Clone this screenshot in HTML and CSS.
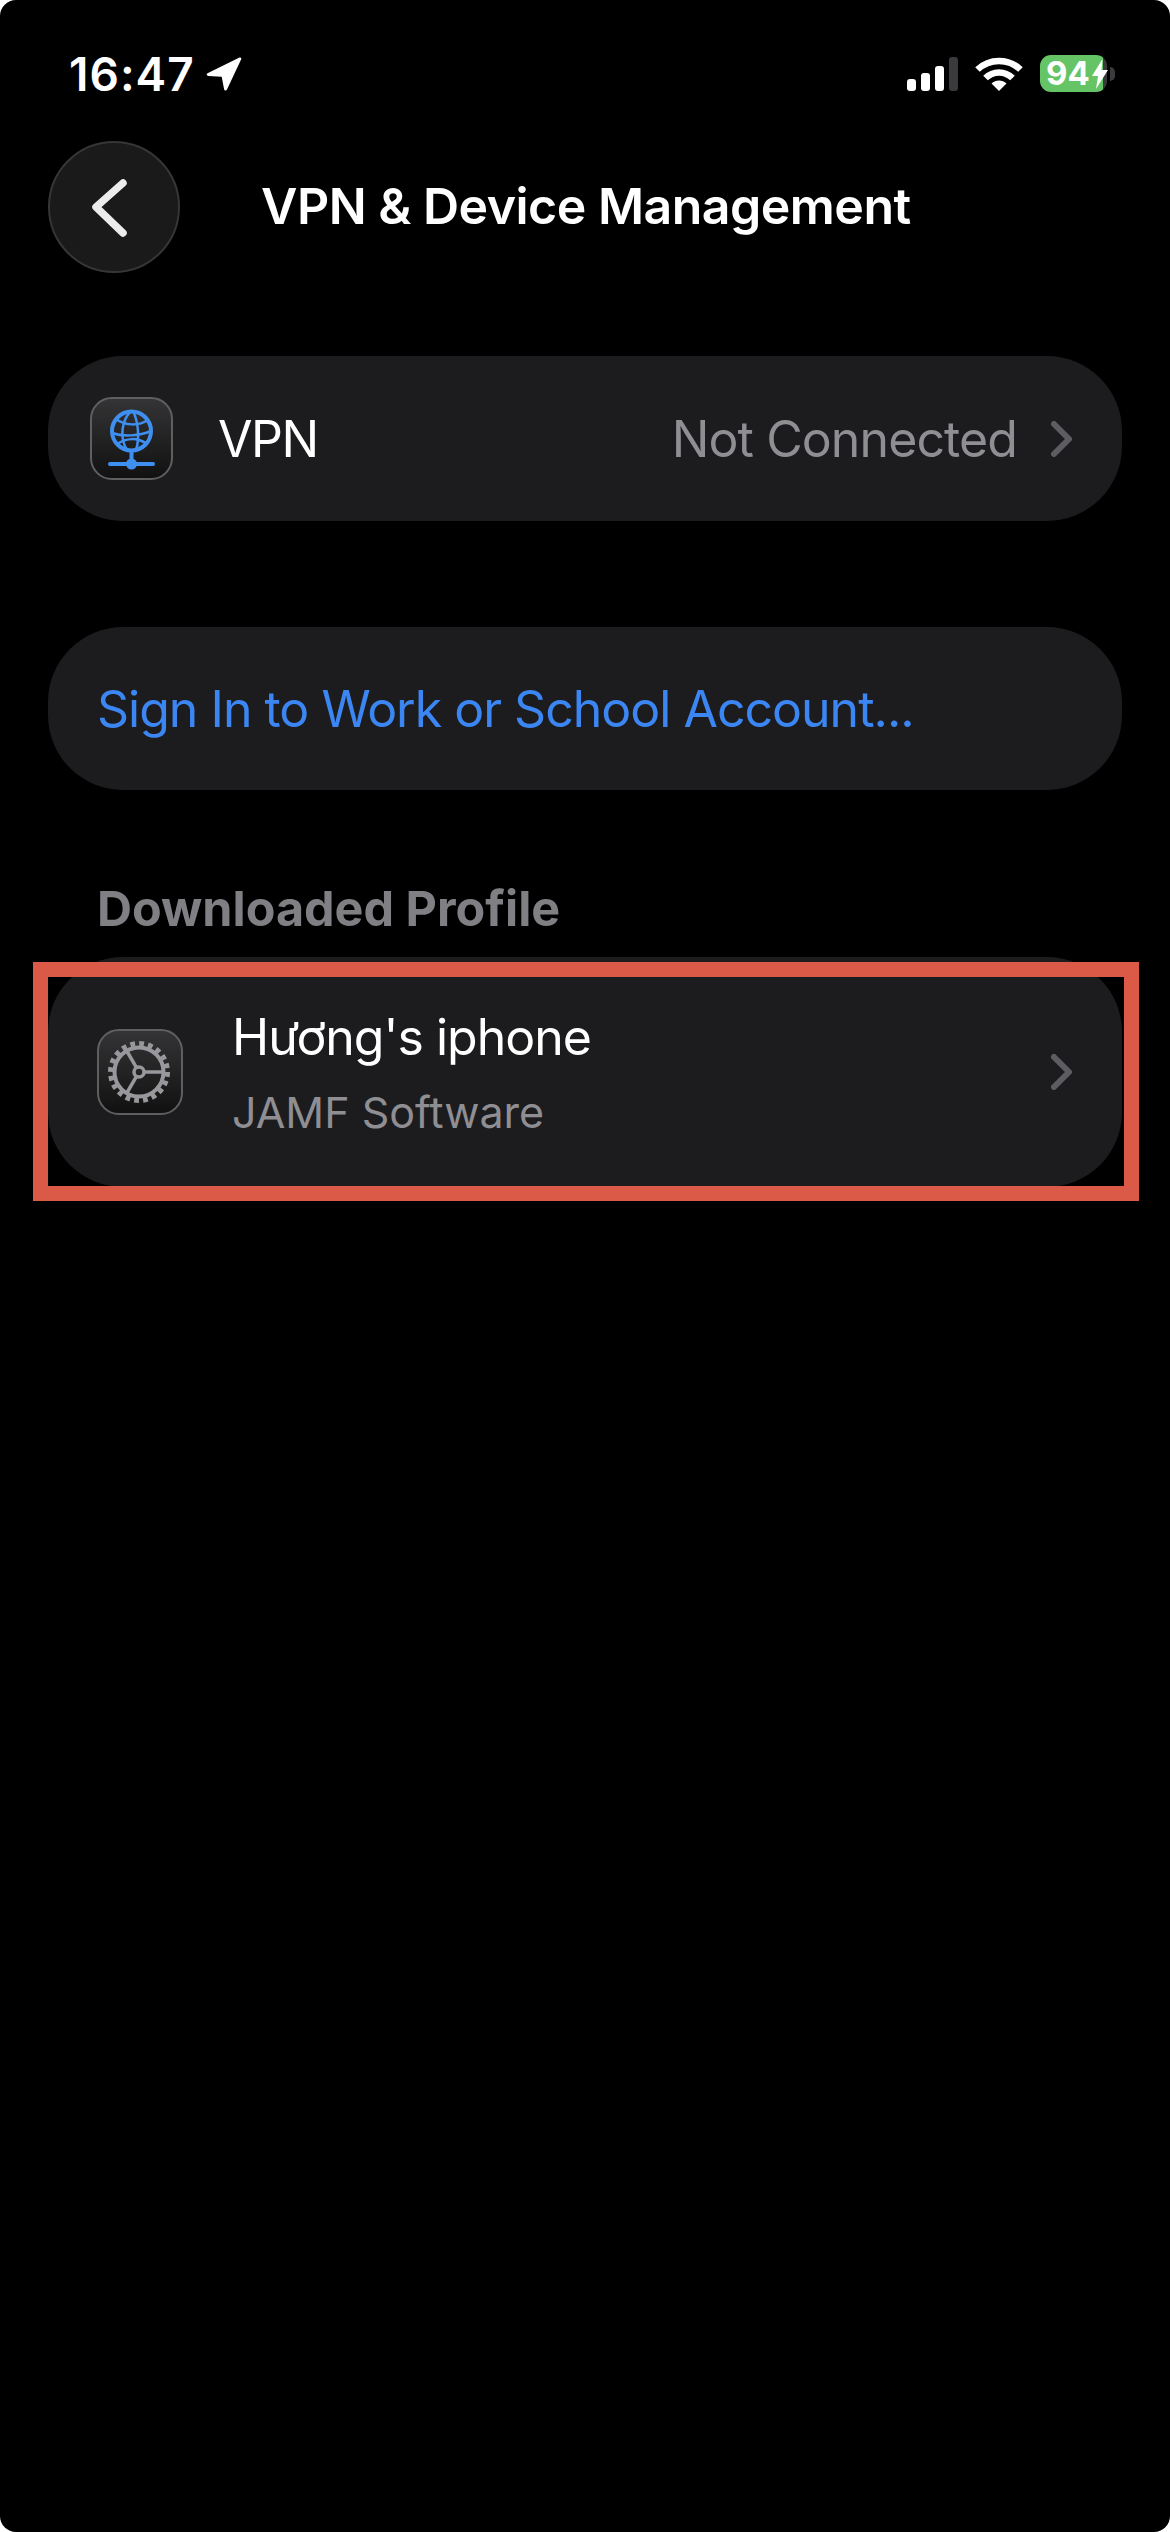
FILE: index.html
```html
<!DOCTYPE html>
<html lang="en">
<head>
<meta charset="utf-8">
<title>VPN &amp; Device Management</title>
<link rel="stylesheet" href="styles.css">
</head>
<body>
<div class="screen">
  <header class="status">
    <div class="status-left">
      <span class="time">16:47</span>
      <svg class="loc" viewBox="0 0 36 36"><path d="M1.500 17.200 33.500 1.600c1.200-.6 2.200.5 1.700 1.700L21 33.600c-.7 1.500-2.600 1.300-2.900-.3l-2.400-12.600L2.400 19.900c-1.900-.1-2.400-1.900-.9-2.700z" fill="#fff"/></svg>
    </div>
    <div class="status-right">
      <div class="signal">
        <span class="bar b1"></span><span class="bar b2"></span><span class="bar b3"></span><span class="bar b4"></span>
      </div>
      <svg class="wifi" viewBox="0 0 48 36"><g fill="none" stroke="#fff" stroke-width="6.500"><path d="M2.500 14.500C14.500 3 33.500 3 45.500 14.500"/><path d="M10.500 23C18 15.500 30 15.500 37.500 23"/></g><path d="M24 36 16.500 28.500C20.500 24.500 27.500 24.500 31.500 28.500z" fill="#fff"/></svg>
      <div class="battery">
        <div class="battery-body">
          <span class="battery-num">94</span>
          <svg class="bolt" viewBox="0 0 16 30"><path d="M10.500 0 0 17h6L4 30 16 11H9.500z" fill="#fff"/></svg>
        </div>
        <span class="battery-tip"></span>
      </div>
    </div>
  </header>

  <nav class="nav">
    <button class="back" type="button" aria-label="Back">
      <svg viewBox="0 0 132 132"><path d="M75 42 48 66 75 92" fill="none" stroke="#ececec" stroke-width="7.500" stroke-linecap="round" stroke-linejoin="round"/></svg>
    </button>
    <h1 class="title">VPN &amp; Device Management</h1>
  </nav>

  <section class="card vpn">
    <span class="app-icon icon-vpn">
      <svg viewBox="0 0 83 83">
        <g fill="none" stroke="#3f8ff0">
          <circle cx="41.500" cy="34" r="19.500" stroke-width="4"/>
          <g stroke-width="2.500">
            <path d="M41 14c-9 9-12 26-4 39"/>
            <path d="M43 14c5 10 7 27 3 39"/>
            <path d="M26 22c9 7 23 7 32 1"/>
            <path d="M22 36c11 4 27 3 39-2"/>
            <path d="M27 47c9-6 20-7 30 0"/>
          </g>
          <path d="M41.500 54v13" stroke-width="4"/>
          <path d="M20 67h43" stroke-width="4" stroke-linecap="round"/>
        </g>
        <circle cx="41.500" cy="67" r="5.500" fill="#3f8ff0"/>
      </svg>
    </span>
    <span class="label">VPN</span>
    <span class="value">Not Connected</span>
    <svg class="chev" viewBox="0 0 21 36"><path d="M3 3 18 18 3 33" fill="none" stroke="#5d5d61" stroke-width="6" stroke-linecap="round" stroke-linejoin="round"/></svg>
  </section>

  <section class="card signin">
    <a class="link">Sign In to Work or School Account...</a>
  </section>

  <h2 class="section-head">Downloaded Profile</h2>

  <section class="card profile">
    <span class="app-icon icon-gear">
      <svg viewBox="0 0 86 86">
        <g fill="none" stroke="#98989c">
          <circle cx="42" cy="43" r="27.500" stroke-width="7" stroke-dasharray="4.600 4.040"/>
          <circle cx="42" cy="43" r="24.500" stroke-width="4"/>
          <circle cx="42" cy="43" r="5" stroke-width="3.500"/>
          <path d="M47 43h20M39.500 38.700 29.500 21.500M39.500 47.300 29.500 64.500" stroke-width="3.500"/>
        </g>
      </svg>
    </span>
    <div class="profile-text">
      <span class="label">Hương's iphone</span>
      <span class="sub">JAMF Software</span>
    </div>
    <svg class="chev" viewBox="0 0 21 36"><path d="M3 3 18 18 3 33" fill="none" stroke="#5d5d61" stroke-width="6" stroke-linecap="round" stroke-linejoin="round"/></svg>
    <div class="highlight"></div>
  </section>
</div>
</body>
</html>
```
FILE: styles.css
```css
* { box-sizing: border-box; }
html { background: #fff; }
body { margin: 0; }
.screen {
  width: 1170px;
  height: 2532px;
  background: #000;
  border-radius: 16px;
  padding: 0 48px;
  color: #fff;
  font-family: Inter, "Noto Sans", sans-serif;
  overflow: hidden;
}
.status {
  height: 141px;
  display: flex;
  justify-content: space-between;
  align-items: flex-start;
  padding-top: 55px;
}
.status-left {
  display: flex;
  align-items: center;
  gap: 11px;
  padding-left: 21px;
}
.time {
  font-size: 46px;
  line-height: 38px;
  font-weight: 600;
  letter-spacing: 1px;
}
.loc { width: 36px; height: 36px; display: block; }
.status-right {
  display: flex;
  align-items: flex-start;
  margin-right: 7px;
}
.signal {
  display: flex;
  align-items: flex-end;
  gap: 5px;
  height: 36px;
  width: 68px;
}
.bar {
  width: 9px;
  background: #fff;
  border-radius: 3px;
}
.b1 { height: 12px; }
.b2 { height: 18px; }
.b3 { height: 25px; }
.b4 { height: 34px; background: #3a3a3c; }
.wifi { width: 48px; height: 36px; display: block; }
.battery { display: flex; align-items: center; margin-left: 17px; height: 37px; }
.battery-body {
  width: 67px;
  height: 37px;
  border-radius: 11px;
  background: linear-gradient(to right, #65c466 94%, #3a3a3c 94%);
  display: flex;
  align-items: center;
  padding-left: 6px;
  gap: 2px;
}
.battery-num {
  font-size: 33px;
  font-weight: 700;
  line-height: 37px;
}
.bolt { width: 16px; height: 30px; display: block; flex: none; }
.battery-tip {
  width: 5px;
  height: 14px;
  margin-left: 3px;
  background: #3a3a3c;
  border-radius: 0 7px 7px 0;
}
.nav {
  display: flex;
  align-items: center;
  gap: 81px;
  height: 132px;
  margin-bottom: 83px;
}
.back {
  width: 132px;
  height: 132px;
  flex: none;
  padding: 0;
  border-radius: 50%;
  border: 2px solid #363636;
  background: #1a1a1a;
  position: relative;
}
.back svg { position: absolute; left: -2px; top: -2px; width: 132px; height: 132px; }
.title {
  margin: 0 0 3px;
  font-size: 50px;
  font-weight: 600;
  line-height: 60px;
  letter-spacing: -0.5px;
}
.card {
  background: #1c1c1e;
  border-radius: 75px;
  display: flex;
  align-items: center;
  position: relative;
}
.vpn {
  height: 165px;
  padding: 0 50px 0 42px;
  margin-bottom: 106px;
}
.app-icon {
  flex: none;
  border-radius: 22px;
  border: 2px solid #5f5f61;
  background: linear-gradient(#343436, #111);
  display: block;
  position: relative;
}
.app-icon svg { position: absolute; left: -2px; top: -2px; }
.icon-vpn { width: 83px; height: 83px; }
.icon-vpn svg { width: 83px; height: 83px; }
.icon-gear { width: 86px; height: 86px; }
.icon-gear svg { width: 86px; height: 86px; }
.label { font-size: 50px; line-height: 60px; letter-spacing: -1px; }
.vpn .label { margin-left: 45px; flex: 1; letter-spacing: -1.5px; }
.value { font-size: 50px; line-height: 60px; color: #8e8e93; margin-right: 34px; letter-spacing: -0.9px; }
.chev { width: 21px; height: 36px; flex: none; display: block; }
.signin {
  height: 163px;
  padding: 0 49px;
  margin-bottom: 89px;
}
.link { font-size: 50px; line-height: 60px; color: #3b86f2; letter-spacing: -1px; }
.section-head {
  margin: 0 0 18px;
  padding-left: 49px;
  font-size: 48.500px;
  line-height: 60px;
  font-weight: 700;
  color: #7f7f84;
}
.profile {
  height: 230px;
  padding: 0 50px 0 49px;
}
.profile-text {
  flex: 1;
  margin-left: 49px;
  padding-top: 4px;
  display: flex;
  flex-direction: column;
  gap: 15px;
}
.sub { font-size: 43px; line-height: 60px; color: #8e8e93; }
.highlight {
  position: absolute;
  left: -15px;
  right: -17px;
  top: 5px;
  bottom: -14px;
  border: 15px solid #db5a47;
}
```
